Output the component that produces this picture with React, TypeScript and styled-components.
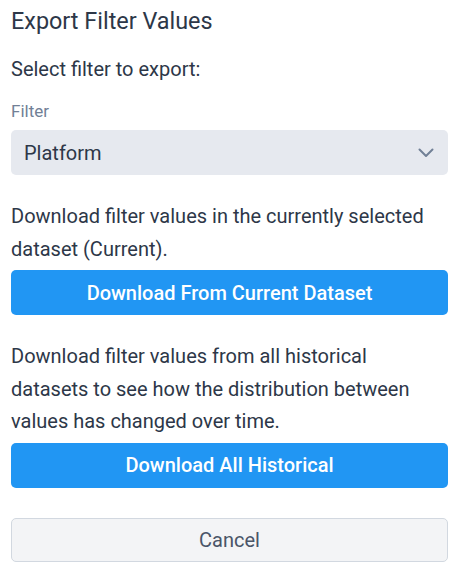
import React from 'react'
import styled, { createGlobalStyle } from 'styled-components'

const GlobalStyle = createGlobalStyle`
  html, body {
    margin: 0;
    padding: 0;
    background: #ffffff;
  }
  body {
    font-family: Roboto, "Liberation Sans", Arial, sans-serif;
    color: #2d3748;
  }
`

const Dialog = styled.div`
  display: flex;
  flex-direction: column;
  padding: 6px 9px 12px 11px;
`

const Title = styled.h2`
  margin: 0;
  font-size: 23.4px;
  font-weight: 400;
  line-height: 30px;
  color: #2d3748;
`

const Prompt = styled.p`
  margin: 18px 0 0;
  font-size: 20px;
  line-height: 30px;
`

const Label = styled.label`
  display: block;
  margin-top: 16px;
  font-size: 17px;
  line-height: 22px;
  color: #718096;
`

const SelectBox = styled.div`
  margin-top: 8px;
  height: 45px;
  display: flex;
  align-items: center;
  justify-content: space-between;
  padding: 0 14px 0 13px;
  border-radius: 5px;
  background: #e6e9ef;
  font-size: 20px;
  color: #2d3748;
`

const Description = styled.p<{ $gap: number }>`
  margin: ${({ $gap }) => $gap}px 0 5px;
  font-size: 20px;
  line-height: 32.5px;
  color: #2d3748;
`

const PrimaryButton = styled.button`
  height: 45px;
  width: 100%;
  border: none;
  border-radius: 5px;
  background: #2196f3;
  color: #ffffff;
  font-family: inherit;
  font-size: 20px;
  font-weight: 500;
  cursor: pointer;
`

const CancelButton = styled.button`
  margin-top: 30px;
  height: 44px;
  width: 100%;
  border: 1px solid #d2d8e0;
  border-radius: 5px;
  background: #f3f4f6;
  color: #4a5568;
  font-family: inherit;
  font-size: 20px;
  font-weight: 400;
  cursor: pointer;
`

const Chevron = () => (
  <svg width="16" height="10" viewBox="0 0 16 10" fill="none" stroke="#718096" strokeWidth="2" strokeLinecap="round" strokeLinejoin="round">
    <polyline points="1.5 1.5 8 8 14.5 1.5" />
  </svg>
)

export default function App() {
  return (
    <>
      <GlobalStyle />
      <Dialog>
        <Title>Export Filter Values</Title>
        <Prompt>Select filter to export:</Prompt>
        <Label>Filter</Label>
        <SelectBox>
          <span>Platform</span>
          <Chevron />
        </SelectBox>
        <Description $gap={25}>
          Download filter values in the currently selected dataset (Current).
        </Description>
        <PrimaryButton>Download From Current Dataset</PrimaryButton>
        <Description $gap={25}>
          Download filter values from all historical datasets to see how the distribution between values has changed over time.
        </Description>
        <PrimaryButton>Download All Historical</PrimaryButton>
        <CancelButton>Cancel</CancelButton>
      </Dialog>
    </>
  )
}
